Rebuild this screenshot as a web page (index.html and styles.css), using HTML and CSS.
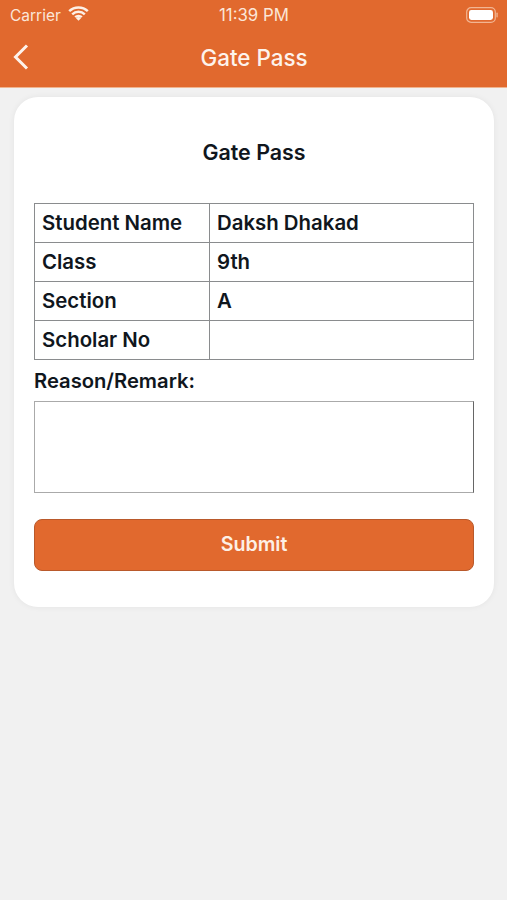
FILE: index.html
```html
<!DOCTYPE html>
<html lang="en">
<head>
<meta charset="utf-8">
<title>Gate Pass</title>
<link rel="stylesheet" href="styles.css">
</head>
<body>
<header class="header">
  <div class="status">
    <div class="status-left">
      <span>Carrier</span>
      <svg class="wifi" width="21" height="15" viewBox="0 0 21 15"><path d="M1.2 5.2a13.4 13.4 0 0 1 18.6 0M4.2 8.3a9.2 9.2 0 0 1 12.6 0M7.2 11.2a4.8 4.8 0 0 1 6.6 0" fill="none" stroke="#fdf0e6" stroke-width="2.5"/><path d="M8 12.3a3.6 3.6 0 0 1 5 0l-2.5 2.4z" fill="#fdf0e6"/></svg>
    </div>
    <span class="time">11:39 PM</span>
    <svg class="battery" width="32" height="16" viewBox="0 0 32 16"><rect x="0.7" y="0.7" width="28.6" height="14.6" rx="4.4" fill="none" stroke="#f2b592" stroke-width="1.2"/><rect x="3" y="3" width="24" height="10" rx="2.4" fill="#fff"/><rect x="30.4" y="5.6" width="1.3" height="4.8" rx="0.6" fill="#f2b592"/></svg>
  </div>
  <div class="nav">
    <svg class="back" width="18" height="28" viewBox="0 0 18 28"><path d="M15 2.5 3.5 14 15 25.5" fill="none" stroke="#fdf3ec" stroke-width="3"/></svg>
    <h1 class="nav-title">Gate Pass</h1>
  </div>
</header>
<main class="card">
  <h2 class="card-title">Gate Pass</h2>
  <table class="info">
    <tr><th>Student Name</th><td>Daksh Dhakad</td></tr>
    <tr><th>Class</th><td>9th</td></tr>
    <tr><th>Section</th><td>A</td></tr>
    <tr><th>Scholar No</th><td></td></tr>
  </table>
  <label class="label" for="reason">Reason/Remark:</label>
  <textarea class="reason" id="reason"></textarea>
  <button class="submit" type="button">Submit</button>
</main>
</body>
</html>
```
FILE: styles.css
```css
* { box-sizing: border-box; }
html, body { margin: 0; height: 100%; }
body {
  background: #f1f1f1;
  font-family: Inter, "Liberation Sans", sans-serif;
  color: #10161d;
  overflow: hidden;
}
.header {
  height: 88px;
  background: #e1692e;
  border-bottom: 1px solid #f0b48f;
  color: #fff;
  padding: 0 9px 0 10px;
}
.status {
  height: 30px;
  display: flex;
  align-items: center;
  justify-content: space-between;
  font-size: 15.5px;
  color: #fbe6d8;
  position: relative;
}
.status-left { display: flex; align-items: center; gap: 7px; }
.wifi { display: block; margin-bottom: 3px; }
.time {
  position: absolute;
  left: 209px;
  font-size: 16.8px;
}
.battery { display: block; }
.nav {
  height: 55px;
  display: flex;
  align-items: center;
  justify-content: center;
  position: relative;
}
.back { position: absolute; left: 2px; top: 13px; }
.nav-title {
  margin: 0 0 1px;
  font-size: 22.4px;
  font-weight: 500;
  color: #fdf3ec;
}
.card {
  width: 480px;
  height: 510px;
  margin: 9px 0 0 14px;
  padding: 41px 20px 0;
  background: #fff;
  border-radius: 24px;
  box-shadow: 0 0 6px rgba(0, 0, 0, 0.06);
}
.card-title {
  margin: 0 0 37px;
  height: 28px;
  line-height: 29px;
  text-align: center;
  font-size: 21.4px;
  font-weight: 600;
}
.info {
  width: 440px;
  border-collapse: collapse;
  table-layout: fixed;
  font-size: 20.4px;
  font-weight: 600;
}
.info th, .info td {
  height: 39px;
  padding: 0 7px 2px;
  border: 1px solid #8a8c8e;
  text-align: left;
  font-weight: 600;
}
.info tr + tr th, .info tr + tr td { border-top-color: #3c4045; }
.info th { width: 175px; }
.label {
  display: block;
  margin-top: 10px;
  height: 23px;
  line-height: 22px;
  font-size: 20.2px;
  font-weight: 600;
}
.reason {
  display: block;
  width: 440px;
  height: 92px;
  margin: 8px 0 0;
  padding: 4px;
  background: #fff;
  border: 1px solid #aaa;
  border-right-color: #666;
  border-radius: 0;
  resize: none;
  outline: none;
}
.submit {
  display: block;
  width: 440px;
  height: 52px;
  margin-top: 26px;
  padding: 0 0 2px;
  background: #e1692e;
  border: 1px solid #b9592b;
  border-radius: 8px;
  color: #fdf0e6;
  font-family: inherit;
  font-size: 19.6px;
  font-weight: 600;
}
```
